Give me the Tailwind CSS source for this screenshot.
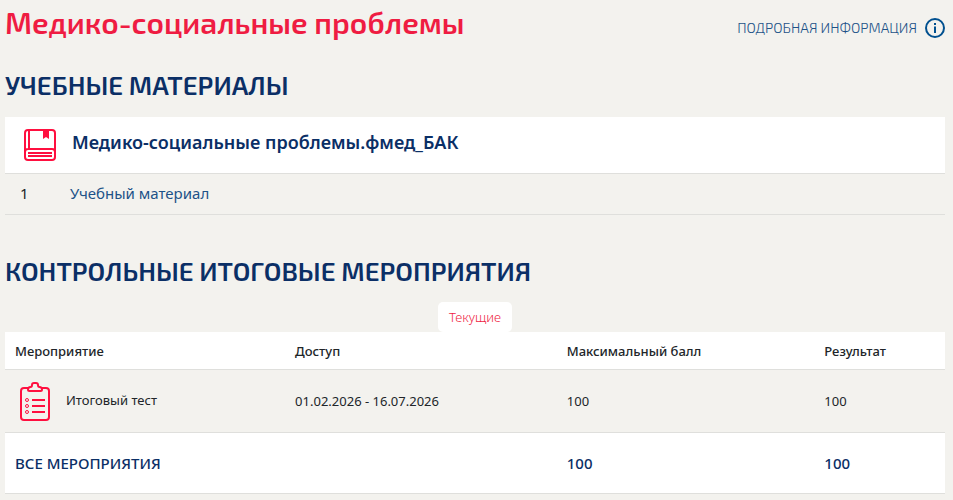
<!DOCTYPE html>
<html lang="ru">
<head>
    <meta charset="UTF-8">
    <meta name="viewport" content="width=device-width, initial-scale=1.0">
    <title>Медико-социальные проблемы</title>
    <!-- Tailwind CSS -->
    <script src="https://cdn.jsdelivr.net/npm/@tailwindcss/browser@4"></script>
</head>
<body class="bg-[#f3f2ee] font-['Noto_Sans','Open_Sans',sans-serif] text-[#212529]">
    <main class="pl-[5px] pr-2 pb-1.5">
        <!-- Заголовок дисциплины -->
        <header class="flex items-start justify-between">
            <h1 class="pt-0.5 font-['Exo_2','Noto_Sans',sans-serif] text-[30px] leading-10 font-semibold text-[#ef1c42]">Медико-социальные проблемы</h1>
            <a href="#info" class="flex items-center gap-2 pt-4 font-['Exo_2',Roboto,sans-serif] text-sm leading-6 font-light text-[#1d5288]">
                ПОДРОБНАЯ ИНФОРМАЦИЯ
                <svg class="size-5" viewBox="0 0 20 20" fill="none" stroke="#00508f" stroke-width="2" aria-hidden="true">
                    <circle cx="10" cy="10" r="9"/>
                    <path d="M10 8.5V15M10 5v2"/>
                </svg>
            </a>
        </header>

        <!-- Учебные материалы -->
        <section>
            <h2 class="pt-[25px] font-['Exo_2','Noto_Sans',sans-serif] text-[26px] leading-9 font-semibold text-[#0b2f66]">УЧЕБНЫЕ МАТЕРИАЛЫ</h2>
            <div class="mt-3.5 flex items-center gap-4 border-b border-[#dfdfdc] bg-white pt-3 pb-3 pl-[19px]">
                <svg class="size-8 shrink-0" viewBox="0 0 32 32" fill="none" stroke="#ff0f3f" stroke-width="2" aria-hidden="true">
                    <rect x="1" y="1" width="30" height="30" rx="3"/>
                    <path d="M5 1v19M1 23q0-3 3-3h24q3 0 3 3M4 24h24M4 27h24"/>
                    <path d="M19 1h6v9l-3-2-3 2z" fill="#ff0f3f" stroke="none"/>
                </svg>
                <h3 class="pb-1.5 text-lg leading-[26px] font-semibold text-[#0b2f66]">Медико-социальные проблемы.фмед_БАК</h3>
            </div>
            <div class="flex border-b border-[#dfdfdc] pt-[7px] pb-[9px] pl-[15px] text-[15px] leading-6">
                <span class="w-[50px]">1</span>
                <a href="#material" class="text-[#1d5288]">Учебный материал</a>
            </div>
        </section>

        <!-- Контрольные мероприятия -->
        <section>
            <h2 class="pt-[38px] font-['Exo_2','Noto_Sans',sans-serif] text-[26px] leading-9 font-semibold text-[#0b2f66]">КОНТРОЛЬНЫЕ ИТОГОВЫЕ МЕРОПРИЯТИЯ</h2>
            <div class="mt-[13px] flex justify-center">
                <button type="button" class="rounded-[5px] bg-white px-[11px] text-[13px] leading-[30px] font-light text-[#ef1c42]">Текущие</button>
            </div>
            <table class="w-full table-fixed text-left text-[13px] leading-5">
                <colgroup>
                    <col class="w-[29.8%]">
                    <col class="w-[28.9%]">
                    <col class="w-[27.4%]">
                    <col class="w-[13.9%]">
                </colgroup>
                <thead>
                    <tr class="border-b border-[#dfdfdc] bg-white">
                        <th class="px-2.5 pt-[9px] pb-2 font-medium">Мероприятие</th>
                        <th class="px-2.5 pt-[9px] pb-2 font-medium">Доступ</th>
                        <th class="px-2.5 pt-[9px] pb-2 font-medium">Максимальный балл</th>
                        <th class="px-2.5 pt-[9px] pb-2 font-medium">Результат</th>
                    </tr>
                </thead>
                <tbody>
                    <tr class="border-b border-[#dfdfdc]">
                        <td class="px-2.5 pt-3 pb-2.5">
                            <div class="flex items-center gap-4 pl-[5px]">
                                <svg class="h-10 w-[30px] shrink-0" viewBox="0 0 30 40" fill="none" stroke="#ff0f3f" stroke-width="2" aria-hidden="true">
                                    <path d="M8 6H4Q1 6 1 9v26q0 3 3 3h22q3 0 3-3V9q0-3-3-3h-4"/>
                                    <path d="M9.500 9Q8 9 8 7.500 8 5 10.500 5 12 5 12 3q0-2 2-2h2q2 0 2 2 0 2 1.500 2Q22 5 22 7.500 22 9 20.500 9z"/>
                                    <path d="M12 18h13M12 24h13M12 30h13"/>
                                    <g stroke-width="1">
                                        <circle cx="7" cy="18" r="1.5"/>
                                        <circle cx="7" cy="24" r="1.5"/>
                                        <circle cx="7" cy="30" r="1.5"/>
                                    </g>
                                </svg>
                                <span class="pb-1">Итоговый тест</span>
                            </div>
                        </td>
                        <td class="px-2.5">01.02.2026 - 16.07.2026</td>
                        <td class="px-2.5">100</td>
                        <td class="px-2.5">100</td>
                    </tr>
                    <tr class="border-b border-[#dfdfdc] bg-white text-[15px] text-[#0b2f66]">
                        <th class="px-2.5 py-5 font-medium" colspan="2">ВСЕ МЕРОПРИЯТИЯ</th>
                        <td class="px-2.5 font-medium">100</td>
                        <td class="px-2.5 font-medium">100</td>
                    </tr>
                </tbody>
            </table>
        </section>
    </main>
</body>
</html>
